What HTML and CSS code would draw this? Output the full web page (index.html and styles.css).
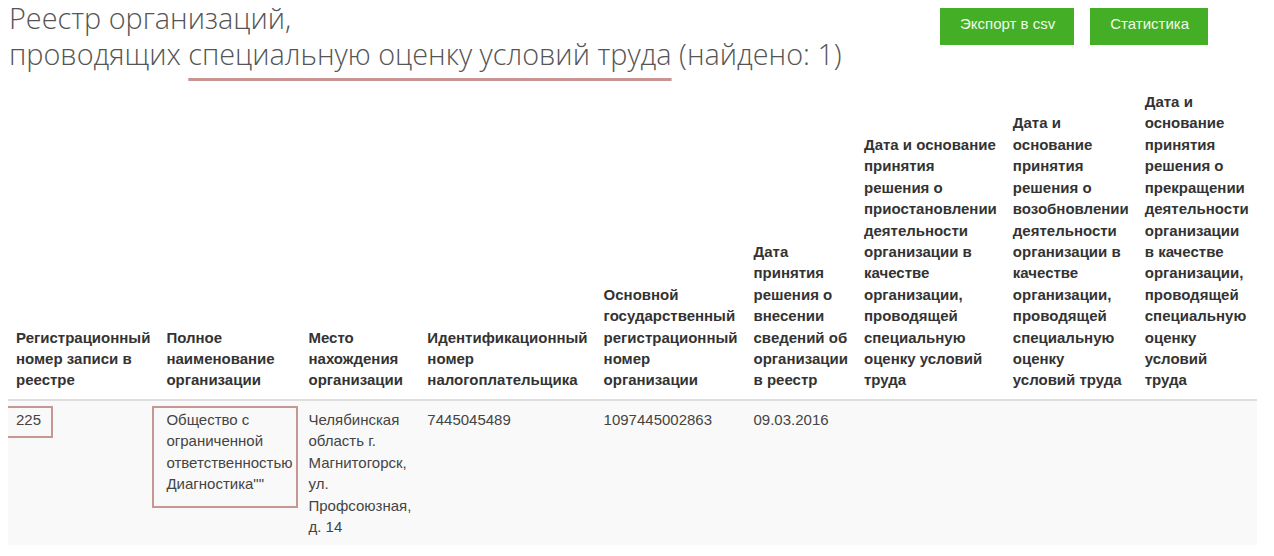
FILE: index.html
```html
<!DOCTYPE html>
<html lang="ru">
<head>
<meta charset="utf-8">
<title>Реестр организаций</title>
<link rel="stylesheet" href="styles.css">
</head>
<body>
<div class="top">
  <h1 class="title">Реестр организаций,<br>проводящих <span class="hl">специальную оценку условий труда</span> (найдено: 1)</h1>
  <div class="actions">
    <a class="btn" href="#">Экспорт в csv</a>
    <a class="btn" href="#">Статистика</a>
  </div>
</div>
<table class="registry">
  <thead>
    <tr>
      <th>Регистрационный номер записи в реестре</th>
      <th>Полное наименование организации</th>
      <th>Место нахождения организации</th>
      <th>Идентификационный номер налогоплательщика</th>
      <th>Основной государственный регистрационный номер организации</th>
      <th>Дата принятия решения о внесении сведений об организации в реестр</th>
      <th>Дата и основание принятия решения о приостановлении деятельности организации в качестве организации, проводящей специальную оценку условий труда</th>
      <th>Дата и основание принятия решения о возобновлении деятельности организации в качестве организации, проводящей специальную оценку условий труда</th>
      <th>Дата и основание принятия решения о прекращении деятельности организации в качестве организации, проводящей специальную оценку условий труда</th>
    </tr>
  </thead>
  <tbody>
    <tr>
      <td class="marked">225<span class="mark mark-num"></span></td>
      <td class="marked">Общество с ограниченной ответственностью Диагностика""<span class="mark mark-name"></span></td>
      <td>Челябинская область г. Магнитогорск, ул. Профсоюзная, д. 14</td>
      <td>7445045489</td>
      <td>1097445002863</td>
      <td>09.03.2016</td>
      <td></td>
      <td></td>
      <td></td>
    </tr>
  </tbody>
</table>
</body>
</html>
```

FILE: styles.css
```css
body {
  margin: 8px;
  background: #fff;
  font-family: "Liberation Sans", Arial, sans-serif;
  color: #333;
}
.top {
  display: flex;
  justify-content: space-between;
  align-items: flex-start;
  height: 75px;
}
.title {
  margin: -8px 0 0 0;
  padding-left: 1px;
  font-family: "Open Sans", sans-serif;
  font-weight: 300;
  font-size: 28.8px;
  line-height: 36px;
  color: #555;
}
.hl {
  text-decoration: underline;
  text-decoration-color: #c99593;
  text-decoration-thickness: 3px;
  text-underline-offset: 13px;
  text-decoration-skip-ink: none;
}
.actions {
  display: flex;
  gap: 16px;
  margin: -5px 58px 0 0;
}
.btn {
  display: block;
  height: 42px;
  line-height: 42px;
  padding: 0 19px 0 20px;
  background: #44ae26;
  color: #eefae6;
  font-family: "Liberation Sans", Arial, sans-serif;
  font-size: 15px;
  text-decoration: none;
}
.registry {
  border-collapse: collapse;
  width: min-content;
  font-size: 15px;
  line-height: 1.42857;
}
.registry th,
.registry td {
  padding: 8px;
  text-align: left;
}
.registry th {
  vertical-align: bottom;
  font-weight: bold;
  color: #333;
  border-bottom: 2px solid #dedede;
}
.registry td {
  vertical-align: top;
  color: #444;
  background: #f9f9f9;
}
.registry td.marked {
  position: relative;
}
.mark {
  position: absolute;
  border: 2px solid #c79793;
}
.mark-num {
  left: -3px;
  top: 5px;
  width: 44px;
  height: 28px;
}
.mark-name {
  left: -6px;
  top: 5px;
  width: 142px;
  height: 98px;
}
```
